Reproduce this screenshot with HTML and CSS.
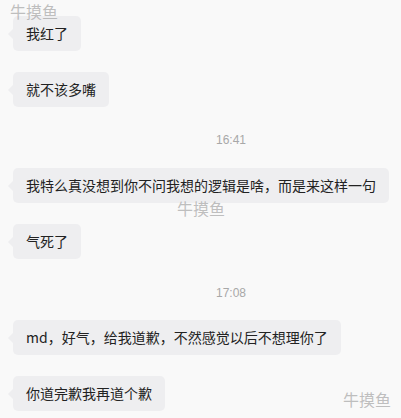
FILE: index.html
```html
<!DOCTYPE html>
<html lang="zh">
<head>
<meta charset="utf-8">
<link rel="stylesheet" href="styles.css">
</head>
<body>
<div class="chat">
  <div class="msg"><div class="bubble">我红了</div></div>
  <div class="msg"><div class="bubble">就不该多嘴</div></div>
  <div class="time t1">16:41</div>
  <div class="msg"><div class="bubble">我特么真没想到你不问我想的逻辑是啥，而是来这样一句</div></div>
  <div class="msg"><div class="bubble">气死了</div></div>
  <div class="time t2">17:08</div>
  <div class="msg"><div class="bubble">md，好气，给我道歉，不然感觉以后不想理你了</div></div>
  <div class="msg"><div class="bubble">你道完歉我再道个歉</div></div>
</div>
<div class="wm wm1">牛摸鱼</div>
<div class="wm wm2">牛摸鱼</div>
<div class="wm wm3">牛摸鱼</div>
</body>
</html>
```
FILE: styles.css
```css
html, body {
  margin: 0;
  padding: 0;
  background: #f9f9f9;
  width: 401px;
  height: 418px;
  overflow: hidden;
  font-family: "Noto Sans CJK SC", "Liberation Sans", sans-serif;
}
.chat {
  display: flex;
  flex-direction: column;
  align-items: flex-start;
  padding: 16px 0 0 13px;
}
.msg {
  position: relative;
  margin-bottom: 21px;
}
.bubble {
  position: relative;
  background: #eeeef0;
  color: #222222;
  font-size: 14px;
  line-height: 21px;
  padding: 7px 13px 7px 13px;
  border-radius: 5px;
  white-space: nowrap;
}
.bubble::before {
  content: "";
  position: absolute;
  left: -5px;
  top: 50%;
  margin-top: -5px;
  border-top: 5px solid transparent;
  border-bottom: 5px solid transparent;
  border-right: 5px solid #eeeef0;
}
.time {
  font-family: "Liberation Sans", "Noto Sans CJK SC", sans-serif;
  font-size: 12px;
  line-height: 16px;
  color: #a8a8a8;
  padding-left: 203px;
}
.t1 { margin-top: 4px; margin-bottom: 20px; }
.t2 { margin-top: 5px; margin-bottom: 19px; }
.wm {
  position: absolute;
  font-family: "Noto Sans CJK SC", sans-serif;
  font-size: 16px;
  line-height: 20px;
  color: rgba(150, 150, 150, 0.6);
}
.wm1 { left: 10px; top: 1px; }
.wm2 { left: 177px; top: 198px; }
.wm3 { left: 343px; top: 389px; }
```
